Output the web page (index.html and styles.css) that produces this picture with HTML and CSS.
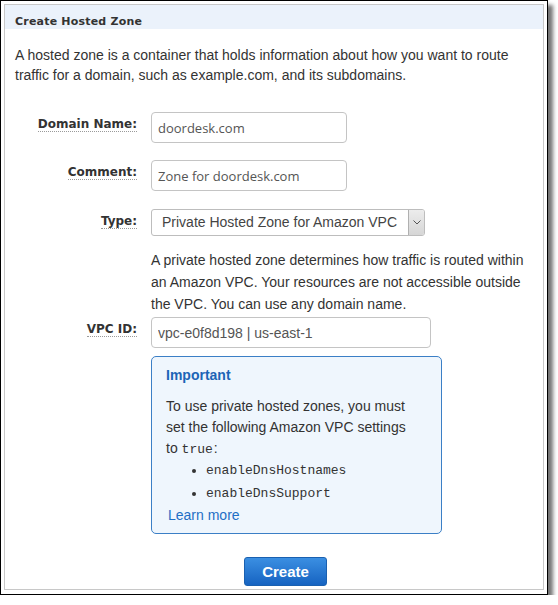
FILE: index.html
```html
<!DOCTYPE html>
<html>
<head>
<meta charset="utf-8">
<link rel="stylesheet" href="styles.css">
</head>
<body>
<div class="frame">
  <div class="panel">
    <div class="header">Create Hosted Zone</div>
    <div class="content">
      <p class="intro">A hosted zone is a container that holds information about how you want to route traffic for a domain, such as example.com, and its subdomains.</p>

      <div class="row row-domain">
        <div class="label"><span>Domain Name:</span></div>
        <div class="field"><input class="input input-short input-soft" type="text" value="doordesk.com"></div>
      </div>

      <div class="row row-comment">
        <div class="label"><span>Comment:</span></div>
        <div class="field"><input class="input input-short input-soft" type="text" value="Zone for doordesk.com"></div>
      </div>

      <div class="row row-type">
        <div class="label"><span>Type:</span></div>
        <div class="field">
          <div class="select">
            <span class="select-text">Private Hosted Zone for Amazon VPC</span>
            <span class="select-arrow"><svg width="8" height="5" viewBox="0 0 8 5"><path d="M0.5 0.5 L4 4 L7.5 0.5" fill="none" stroke="#555" stroke-width="1"/></svg></span>
          </div>
          <p class="help">A private hosted zone determines how traffic is routed within an Amazon VPC. Your resources are not accessible outside the VPC. You can use any domain name.</p>
        </div>
      </div>

      <div class="row row-vpc">
        <div class="label"><span>VPC ID:</span></div>
        <div class="field"><input class="input input-long" type="text" value="vpc-e0f8d198 | us-east-1"></div>
      </div>

      <div class="row row-note">
        <div class="label"></div>
        <div class="field">
          <div class="note">
            <div class="note-title">Important</div>
            <p class="note-text">To use private hosted zones, you must set the following Amazon VPC settings <span class="nowrap">to <code>true</code>:</span></p>
            <ul class="note-list">
              <li>enableDnsHostnames</li>
              <li>enableDnsSupport</li>
            </ul>
            <a class="note-link" href="#">Learn more</a>
          </div>
        </div>
      </div>

      <div class="row row-actions">
        <div class="label"></div>
        <div class="field"><button class="btn" type="button">Create</button></div>
      </div>
    </div>
  </div>
</div>
</body>
</html>
```

FILE: styles.css
```css
* { box-sizing: border-box; }

html, body {
  margin: 0;
  padding: 0;
  background: #ffffff;
}

.frame {
  width: 548px;
  height: 595px;
  border: 1px solid #000;
  padding: 3px 3px 4px 3px;
  background: #fff;
  box-shadow: 5px 5px 4px rgba(0, 0, 0, 0.55);
}

.panel {
  height: 100%;
  border: 1px solid #c8c8c8;
  background: #fff;
}

.header {
  height: 24px;
  padding: 10px 0 0 10px;
  background: #ebf2fb;
  font-family: "DejaVu Sans", Verdana, sans-serif;
  font-weight: bold;
  font-size: 11px;
  line-height: 14px;
  letter-spacing: 0.2px;
  color: #333;
}

.content {
  font-family: "Liberation Sans", Arial, sans-serif;
  font-size: 14px;
  color: #333;
}

.intro {
  margin: 16px 0 0 0;
  padding: 0 2px 0 10px;
  line-height: 20px;
}

.row {
  display: grid;
  grid-template-columns: 132px 1fr;
  column-gap: 14px;
  align-items: start;
}

.row-domain { margin-top: 27px; }
.row-comment { margin-top: 17px; }
.row-type { margin-top: 18px; }
.row-vpc { margin-top: 2px; }
.row-note { margin-top: 8px; }
.row-actions { margin-top: 23px; }

.label {
  text-align: right;
  padding-top: 3px;
}

.label span {
  display: inline-block;
  font-family: "DejaVu Sans", Verdana, sans-serif;
  font-weight: bold;
  font-size: 12px;
  line-height: 14px;
  color: #333;
  border-bottom: 1px dotted #9a9a9a;
}

.input {
  display: block;
  height: 31px;
  margin: 0;
  padding: 0 6px;
  border: 1px solid #c4c4c4;
  border-radius: 4px;
  background: #fff;
  font-family: "Liberation Sans", Arial, sans-serif;
  font-size: 14px;
  color: #555;
  outline: none;
}

.input-soft {
  font-family: "Open Sans", "Noto Sans", sans-serif;
  font-size: 13px;
}

.input-short { width: 196px; }
.input-long { width: 280px; }

.select {
  display: flex;
  align-items: stretch;
  width: 274px;
  height: 27px;
  border: 1px solid #bdbdbd;
  border-radius: 3px;
  background: #fff;
}

.select-text {
  flex: 1;
  padding-left: 10px;
  line-height: 25px;
  color: #444;
  white-space: nowrap;
}

.select-arrow {
  width: 16px;
  display: flex;
  align-items: center;
  justify-content: center;
  border-left: 1px solid #b0b0b0;
  border-radius: 0 2px 2px 0;
  background: linear-gradient(#ececec, #d6d6d6);
}

.help {
  width: 382px;
  margin: 13px 0 0 0;
  line-height: 22px;
}

.note {
  width: 291px;
  padding: 8px 20px 7px 14px;
  border: 1px solid #3b7fc6;
  border-radius: 5px;
  background: #eff6fd;
}

.note-title {
  font-weight: bold;
  line-height: 21px;
  color: #1c64b6;
}

.note-text {
  margin: 10px 0 0 0;
  line-height: 21px;
}

.nowrap {
  white-space: nowrap;
}

.note-text code {
  font-family: "Liberation Mono", "Courier New", monospace;
  font-size: 13px;
  line-height: 1;
  margin-right: 1px;
}

.note-list {
  margin: 0;
  padding-left: 40px;
  font-family: "Liberation Mono", "Courier New", monospace;
  font-size: 13px;
}

.note-list li {
  line-height: 23px;
}

.note-link {
  display: block;
  margin-left: 2px;
  line-height: 21px;
  color: #1f6fc5;
  text-decoration: none;
}

.btn {
  display: block;
  width: 83px;
  height: 29px;
  margin: 0 0 0 93px;
  padding: 0;
  border: 1px solid #1a60b0;
  border-radius: 3px;
  background: linear-gradient(#3b8fe2, #1663c1);
  color: #fff;
  font-family: "Liberation Sans", Arial, sans-serif;
  font-weight: bold;
  font-size: 15px;
}
```
